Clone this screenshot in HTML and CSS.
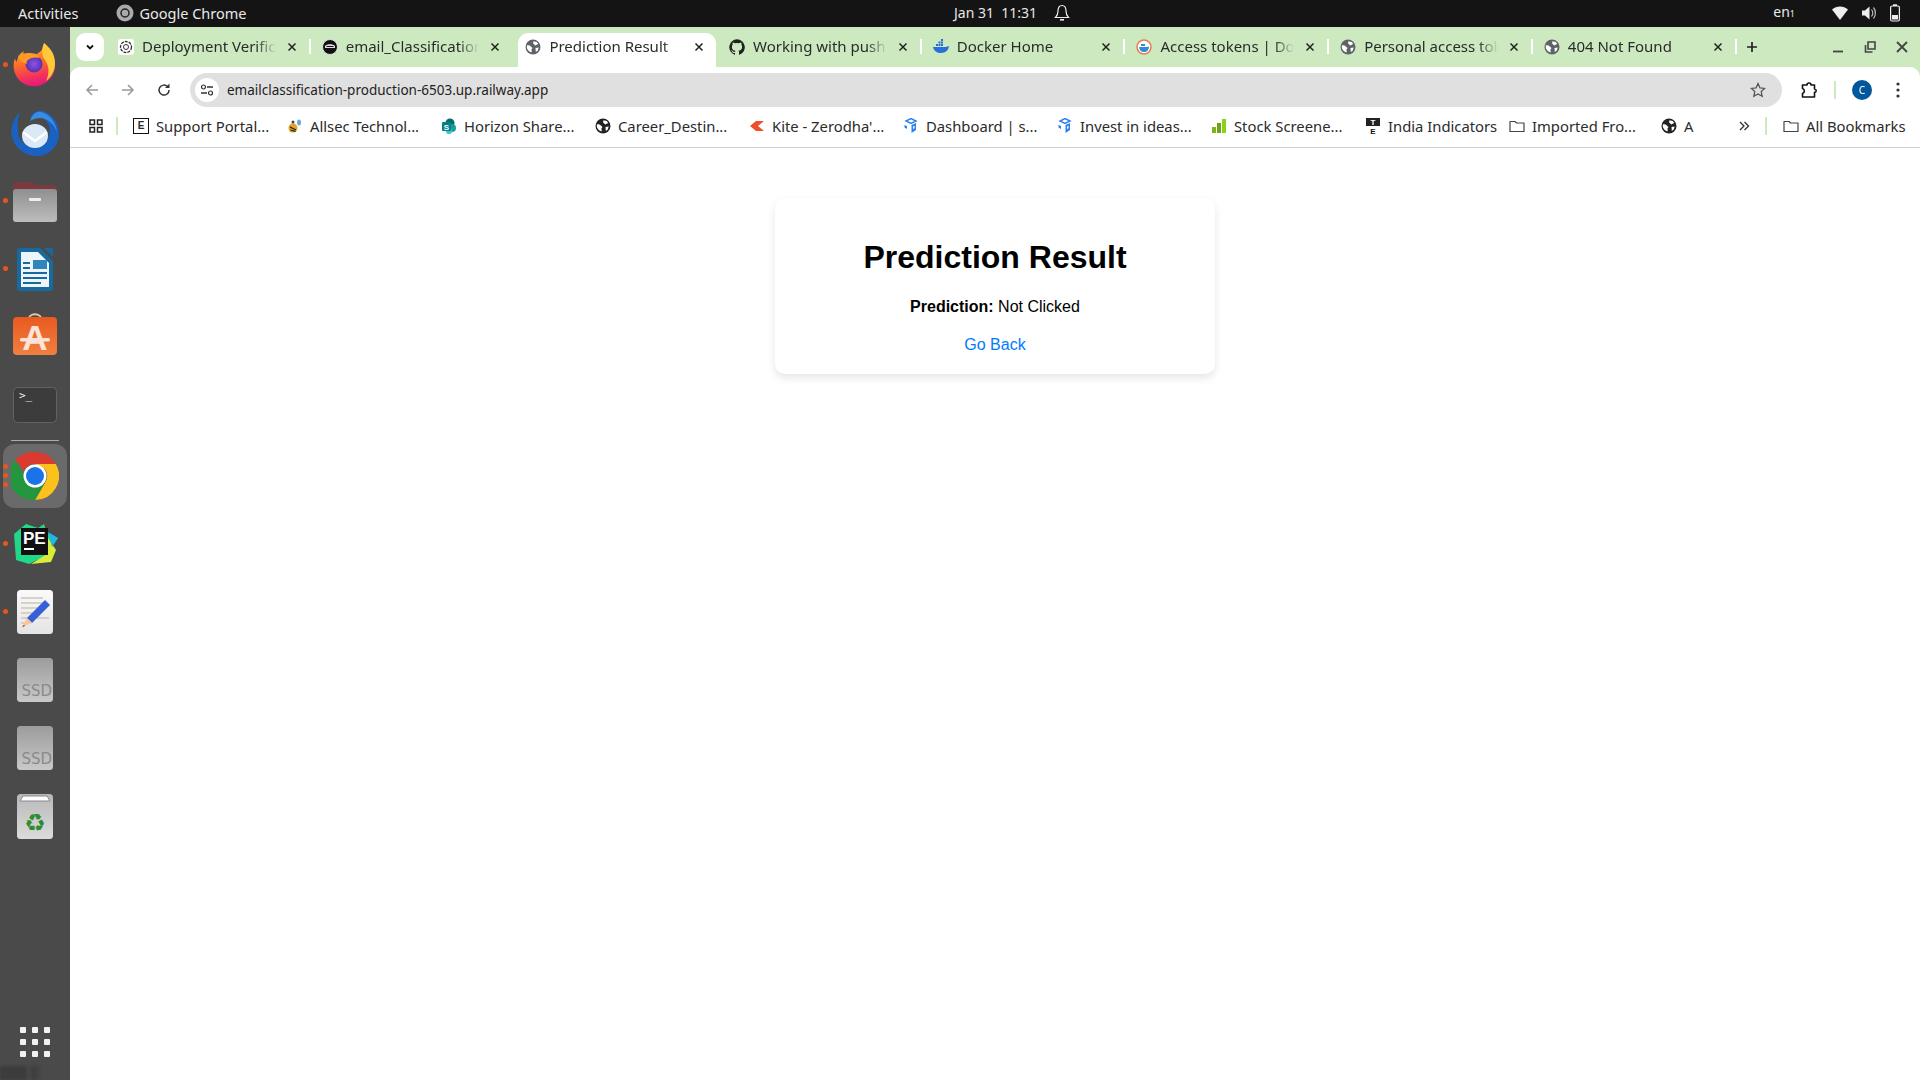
FILE: index.html

```html
<!DOCTYPE html>
<html>
<head>
  <title>Prediction Result</title>
  <link rel="stylesheet" href="styles.css">
</head>
<body>
  <svg class="defs" width="0" height="0">
    <symbol id="globe" viewBox="0 0 16 16">
      <circle cx="8" cy="8" r="7.500" fill="currentColor"/>
      <path d="M1.800 6.500c1.500-.5 3 0 4 1l1.700 1.500-1 1.200.2 3.300C4 13 2 10.500 1.800 8.500zM8.500 2.200l3.200.7 1.500 2-3 1.600-2.200-2.200zM10.500 9l3.200-.5-.9 3-2 1.500z" fill="#fff"/>
    </symbol>
    <symbol id="folder" viewBox="0 0 16 16">
      <path d="M1 3.500h5l1.500 1.500H15v8.500H1z" fill="none" stroke="currentColor" stroke-width="1.200" stroke-linejoin="round"/>
    </symbol>
    <symbol id="cube" viewBox="0 0 16 16">
      <path d="M8 .5l5 2.500-5 2.500-5-2.500z" fill="none" stroke="#2f80ed" stroke-width="1.500"/>
      <path d="M8.500 7l4.500-2v7l-4.500 3zM1.500 7l2.500 1v3l-2.500-1.500z" fill="#2f80ed"/>
      <path d="M10 8.500l1.500-.7v2.500l-1.500.7z" fill="#fff"/>
    </symbol>
    <symbol id="close" viewBox="0 0 16 16">
      <path d="M4.500 4.500l7 7M11.500 4.500l-7 7" stroke="currentColor" stroke-width="1.500" fill="none"/>
    </symbol>
    <symbol id="ssd" viewBox="0 0 36 44">
      <rect width="36" height="44" rx="3.500" fill="url(#ssdGrad)"/>
      <text x="35" y="38" text-anchor="end" class="ssd-label">SSD</text>
    </symbol>
    <linearGradient id="ssdGrad" x1="0" y1="0" x2="0" y2="1">
      <stop offset="0" stop-color="#9c9c9c"/><stop offset="1" stop-color="#c9c9c9"/>
    </linearGradient>
  </svg>

  <header class="top-bar">
    <div class="top-left">
      <span class="activities">Activities</span>
      <svg class="top-app-icon" width="18" height="18" viewBox="0 0 18 18"><circle cx="9" cy="9" r="8.500" fill="#aaa"/><circle cx="9" cy="9" r="4" fill="none" stroke="#222" stroke-width="1.500"/></svg>
      <span>Google Chrome</span>
    </div>
    <div class="top-clock">
      <span>Jan 31&nbsp;&nbsp;11:31</span>
      <svg width="16" height="18" viewBox="0 0 16 18"><path d="M8 1.500c-3 0-4 2.500-4 5.500 0 3-1 5-2.500 6.500h13C13 12 12 10 12 7c0-3-1-5.500-4-5.500z" fill="none" stroke="#eee" stroke-width="1.200"/><rect x="6" y="15" width="4" height="1.600" fill="#eee"/></svg>
    </div>
    <div class="top-right">
      <span class="lang">en<small>1</small></span>
      <svg class="wifi" width="16" height="14" viewBox="0 0 16 14"><path d="M0 3.500C4.500-.5 11.500-.5 16 3.500L8 14z" fill="#eee"/></svg>
      <svg class="vol" width="16" height="16" viewBox="0 0 16 16"><path d="M1 5.500h3L8.500 1.500v13L4 10.500H1z" fill="#eee"/><path d="M10.500 4.500c1.500 2 1.500 5 0 7M12.500 2.500c2.500 3 2.500 8 0 11" fill="none" stroke="#bbb" stroke-width="1.200"/></svg>
      <svg width="10" height="18" viewBox="0 0 10 18"><rect x=".6" y="2" width="8.800" height="15" rx="1.500" fill="none" stroke="#eee" stroke-width="1.200"/><rect x="3" y=".3" width="4" height="1.700" fill="#eee"/><rect x="2" y="11" width="6" height="4.500" fill="#eee"/></svg>
    </div>
  </header>

  <div class="desktop">
    <aside class="dock">
      <div class="dock-item running">
        <svg width="44" height="44" viewBox="0 0 44 44">
          <defs>
            <linearGradient id="ffOuter" x1=".3" y1="0" x2=".5" y2="1"><stop offset="0" stop-color="#ffc02e"/><stop offset=".45" stop-color="#ff6f24"/><stop offset=".8" stop-color="#f2305f"/><stop offset="1" stop-color="#e3197f"/></linearGradient>
            <radialGradient id="ffBall"><stop offset="0" stop-color="#8a55e8"/><stop offset="1" stop-color="#5a2fb0"/></radialGradient>
          </defs>
          <path d="M31 0c1 5 6 7 9 13 4 9 2 19-5 25-8 7-20 7-28 0C1 32-1 23 2 15c0 2 1 3 2 4 0-4 3-9 7-11-1 2-1 3 0 4 4-3 9-1 13-1 4-3 8-6 7-11z" fill="url(#ffOuter)"/>
          <path d="M31 0c5 4 11 10 11 20 0 8-4 14-9 18 3-6 4-14-1-21-3-4-4-10-1-17z" fill="#ffc93a"/>
          <circle cx="21" cy="21" r="8.500" fill="url(#ffBall)"/>
          <path d="M5 13c5-3 11-4 16-2 3 1 5 3 6 4-4-1-9-1-12 2-1 1-2 2-1 4-4-1-7-4-9-8z" fill="#ff9a24"/>
        </svg>
      </div>
      <div class="dock-item">
        <svg width="48" height="46" viewBox="0 0 48 46">
          <path d="M9 2C2 9-1 18 1 27c3 12 14 19 25 19 12 0 22-10 22-22 0-10-6-20-16-23-6-1-11 2-13 7 5-3 13-2 17 4 5 7 3 18-5 23-8 4-19 1-23-8C6 19 6 10 9 2z" fill="#1a62c2"/>
          <path d="M30 2c8 2 15 10 16 20-3-8-9-13-16-14-4 0-8 1-11 3 2-6 6-10 11-9z" fill="#3d8be0"/>
          <ellipse cx="24" cy="26" rx="13" ry="12" fill="#d9e9f8"/>
          <path d="M12 22l12 9 12-9" fill="none" stroke="#fff" stroke-width="2.500"/>
        </svg>
      </div>
      <div class="dock-item running">
        <svg width="44" height="41" viewBox="0 0 44 41">
          <defs><linearGradient id="filesBody" x1="0" y1="0" x2="0" y2="1"><stop offset="0" stop-color="#8f8f8f"/><stop offset="1" stop-color="#bdbdbd"/></linearGradient></defs>
          <path d="M0 4a3 3 0 013-3h16l4 3h18a3 3 0 013 3v8H0z" fill="#7a3a40"/>
          <rect y="8" width="44" height="33" rx="3" fill="url(#filesBody)"/>
          <rect x="16" y="17" width="12" height="3" rx="1" fill="#eee"/>
        </svg>
      </div>
      <div class="dock-item running">
        <svg width="37" height="44" viewBox="0 0 37 44">
          <path d="M27 1h9v9z" fill="#14699e"/>
          <path d="M3 1h20l13 13v27a3 3 0 01-3 3H3a3 3 0 01-3-3V4a3 3 0 013-3z" fill="#18699e"/>
          <path d="M4 5h17l11 11v24H4z" fill="#eef5fa"/>
          <path d="M6 15h7v2H6zM6 20h7v2H6zM6 25h24v2H6zM6 30h24v2H6zM6 35h18v2H6z" fill="#18699e"/>
          <rect x="16" y="13" width="14" height="9" fill="#2f86b8"/>
        </svg>
      </div>
      <div class="dock-item">
        <svg class="store-icon" width="44" height="42" viewBox="0 0 44 42">
          <defs><linearGradient id="storeBody" x1="0" y1="0" x2="0" y2="1"><stop offset="0" stop-color="#e95a20"/><stop offset="1" stop-color="#f08040"/></linearGradient></defs>
          <path d="M15 8c0-9 14-9 14 0" fill="none" stroke="#e8c8a8" stroke-width="1.800"/>
          <rect y="4" width="44" height="38" rx="4" fill="url(#storeBody)"/>
          <text x="22" y="37" text-anchor="middle" class="store-label">A</text>
          <rect x="7" y="25" width="30" height="3.500" rx="1.500" fill="#fde3d6"/>
        </svg>
      </div>
      <div class="dock-item">
        <svg width="44" height="36" viewBox="0 0 44 36">
          <rect x=".5" y=".5" width="43" height="35" rx="4" fill="#3c3c3c" stroke="#626262"/>
          <text x="6" y="12" class="term-label">&gt;_</text>
        </svg>
      </div>
      <div class="dock-separator"></div>
      <div class="dock-item dock-active running-three">
        <svg width="48" height="48" viewBox="0 0 48 48">
          <path d="M24 0a24 24 0 0120.800 12H24a12 12 0 00-11 7L4.400 8A24 24 0 0124 0z" fill="#db3b2f"/>
          <path d="M44.800 12A24 24 0 0124 48l10.400-18A12 12 0 0034 17l-10-5z" fill="#fcc21b"/>
          <path d="M24 48A24 24 0 014.400 8L14 24.500a12 12 0 0011 11.500l9.400-6z" fill="#23963e"/>
          <circle cx="24" cy="24" r="11.500" fill="#fff"/>
          <circle cx="24" cy="24" r="9" fill="#1a73e8"/>
        </svg>
      </div>
      <div class="dock-item running">
        <svg width="46" height="44" viewBox="0 0 46 44">
          <path d="M2 12L14 2l12 4 6-4 0 8 14 6-6 8-1 12-14 2-8 4-13-4z" fill="#21d789"/>
          <path d="M32 2l3 30-16 10 20-2 5-12-8-12z" fill="#d9ec37"/>
          <path d="M36 10l10 6-6 9z" fill="#1fb6e8"/>
          <rect x="9" y="6" width="27" height="27" fill="#111"/>
          <text x="11" y="22" class="pe-label">PE</text>
          <rect x="12" y="26" width="10" height="2" fill="#fff"/>
        </svg>
      </div>
      <div class="dock-item running">
        <svg width="36" height="44" viewBox="0 0 36 44">
          <defs><linearGradient id="padBody" x1="0" y1="0" x2="0" y2="1"><stop offset="0" stop-color="#fafafa"/><stop offset="1" stop-color="#e4e4e4"/></linearGradient></defs>
          <rect width="36" height="44" rx="3.500" fill="url(#padBody)"/>
          <path d="M4 8h22M4 13h22M4 18h20M4 23h14M4 28h28M4 33h6" stroke="#cfc8b8" stroke-width="1.500"/>
          <path d="M28 10l5 5-18 18-5-5z" fill="#3560d8"/>
          <path d="M10 28l5 5-10 4z" fill="#f5c79a"/>
          <path d="M7 35l-2 2 3-1z" fill="#333"/>
        </svg>
      </div>
      <div class="dock-item"><svg width="36" height="44"><use href="#ssd"/></svg></div>
      <div class="dock-item"><svg width="36" height="44"><use href="#ssd"/></svg></div>
      <div class="dock-item">
        <svg width="36" height="45" viewBox="0 0 36 45">
          <defs><linearGradient id="trashBody" x1="0" y1="0" x2="0" y2="1"><stop offset="0" stop-color="#b8b8b8"/><stop offset="1" stop-color="#dcdcdc"/></linearGradient></defs>
          <rect width="36" height="45" rx="3.500" fill="url(#trashBody)"/>
          <path d="M3 7l3-5h24l3 5z" fill="#fff" stroke="#8a8a8a"/>
          <text x="18" y="37" text-anchor="middle" class="recycle">♻</text>
        </svg>
      </div>
      <div class="dock-grid">
        <i></i><i></i><i></i><i></i><i></i><i></i><i></i><i></i><i></i>
      </div>
      <div class="dock-smudge"></div>
    </aside>

    <div class="browser">
      <div class="tab-strip">
        <button class="tab-list">
          <svg width="12" height="12" viewBox="0 0 12 12"><path d="M3 4.500L6 7.500 9 4.500" fill="none" stroke="#111" stroke-width="1.800"/></svg>
        </button>
        <div class="tab">
          <svg class="favicon" viewBox="0 0 16 16"><rect width="16" height="16" rx="3" fill="#fff"/><circle cx="8" cy="8" r="5.500" fill="none" stroke="#333" stroke-width="1.300" stroke-dasharray="3 1"/><circle cx="8" cy="8" r="2.500" fill="none" stroke="#333"/></svg>
          <span class="tab-title">Deployment Verification</span>
          <svg class="tab-close"><use href="#close"/></svg>
        </div>
        <div class="tab no-divider">
          <svg class="favicon" viewBox="0 0 16 16"><circle cx="8" cy="8" r="7.500" fill="#111" stroke="#ddd"/><path d="M3 7c1.500-2.500 8.500-2.500 10 0v2H3z" fill="#ddd"/><path d="M4.500 7.500h7" stroke="#111"/></svg>
          <span class="tab-title">email_Classification</span>
          <svg class="tab-close"><use href="#close"/></svg>
        </div>
        <div class="tab tab-active no-divider">
          <svg class="favicon globe-grey"><use href="#globe"/></svg>
          <span class="tab-title">Prediction Result</span>
          <svg class="tab-close"><use href="#close"/></svg>
        </div>
        <div class="tab">
          <svg class="favicon" viewBox="0 0 16 16"><path d="M8 .3a8 8 0 00-2.500 15.500c.4.1.5-.2.5-.4v-1.400c-2.200.5-2.700-1-2.700-1-.4-.9-.9-1.200-.9-1.200-.7-.5.1-.5.1-.5.8.1 1.200.8 1.200.8.7 1.200 1.900.9 2.300.7.1-.5.3-.9.5-1.100-1.800-.2-3.600-.9-3.600-4 0-.9.3-1.600.8-2.100-.1-.2-.4-1 .1-2.100 0 0 .7-.2 2.200.8a7.500 7.500 0 014 0c1.500-1 2.200-.8 2.200-.8.5 1.100.2 1.900.1 2.100.5.6.8 1.300.8 2.100 0 3.100-1.900 3.700-3.700 3.900.3.300.6.800.6 1.500v2.300c0 .2.1.5.6.4A8 8 0 008 .3z" fill="#222"/></svg>
          <span class="tab-title">Working with push protection</span>
          <svg class="tab-close"><use href="#close"/></svg>
        </div>
        <div class="tab">
          <svg class="favicon" viewBox="0 0 16 16"><path d="M0 8h13c1 0 2-1 3-1-.5 4-3 7-8 7-4 0-7-2-8-6z" fill="#2a6fd8"/><path d="M3 5h2v2H3zM5.500 5h2v2h-2zM8 5h2v2H8zM5.500 2.500h2v2h-2zM8 2.500h2v2H8zM8 0h2v2H8z" fill="#2a6fd8"/></svg>
          <span class="tab-title">Docker Home</span>
          <svg class="tab-close"><use href="#close"/></svg>
        </div>
        <div class="tab">
          <svg class="favicon" viewBox="0 0 16 16"><circle cx="8" cy="8" r="7" fill="#fff" stroke="#e67c52" stroke-width="1.500"/><path d="M3 8h8c1 0 1.500-.5 2-.5C13 11 11 13 8 13c-3 0-4.500-2-5-5z" fill="#2a8fd8"/><path d="M5 5h4v2H5z" fill="#2a8fd8"/></svg>
          <span class="tab-title">Access tokens | Docker</span>
          <svg class="tab-close"><use href="#close"/></svg>
        </div>
        <div class="tab">
          <svg class="favicon globe-grey"><use href="#globe"/></svg>
          <span class="tab-title">Personal access tokens</span>
          <svg class="tab-close"><use href="#close"/></svg>
        </div>
        <div class="tab">
          <svg class="favicon globe-grey"><use href="#globe"/></svg>
          <span class="tab-title">404 Not Found</span>
          <svg class="tab-close"><use href="#close"/></svg>
        </div>
        <svg class="new-tab" width="14" height="14" viewBox="0 0 14 14"><path d="M7 2v10M2 7h10" stroke="#222" stroke-width="1.700"/></svg>
        <div class="window-controls">
          <svg width="14" height="14" viewBox="0 0 14 14"><path d="M2 11.500h10" stroke="#444" stroke-width="1.800"/></svg>
          <svg width="14" height="14" viewBox="0 0 14 14"><path d="M5 2h7v7H5zM2.500 5v7h7" fill="none" stroke="#444" stroke-width="1.600"/></svg>
          <svg width="14" height="14" viewBox="0 0 14 14"><path d="M2 2l10 10M12 2L2 12" stroke="#444" stroke-width="1.800"/></svg>
        </div>
      </div>

      <div class="toolbar">
        <svg class="nav-icon nav-back" viewBox="0 0 16 16"><path d="M14 8H3M8 3L3 8l5 5" fill="none" stroke="#999" stroke-width="1.500"/></svg>
        <svg class="nav-icon nav-forward" viewBox="0 0 16 16"><path d="M2 8h11M8 3l5 5-5 5" fill="none" stroke="#999" stroke-width="1.500"/></svg>
        <svg class="nav-icon nav-reload" viewBox="0 0 16 16"><path d="M13 8a5 5 0 11-1.500-3.500" fill="none" stroke="#333" stroke-width="1.500"/><path d="M13.500 1.500v4.500H9z" fill="#333"/></svg>
        <div class="address-bar">
          <span class="site-info">
            <svg width="14" height="14" viewBox="0 0 14 14"><path d="M7 4h6M1 10h6" stroke="#333" stroke-width="1.300"/><circle cx="3.500" cy="4" r="2" fill="none" stroke="#333" stroke-width="1.200"/><circle cx="10.500" cy="10" r="2" fill="none" stroke="#333" stroke-width="1.200"/></svg>
          </span>
          <span class="url">emailclassification-production-6503.up.railway.app</span>
          <svg class="star" width="16" height="16" viewBox="0 0 16 16"><path d="M8 1.500l2 4.400 4.700.5-3.500 3.200 1 4.700L8 11.900l-4.200 2.400 1-4.700L1.300 6.400 6 5.900z" fill="none" stroke="#555" stroke-width="1.300"/></svg>
        </div>
        <svg class="ext-icon" width="18" height="18" viewBox="0 0 18 18"><path d="M2.500 4H7a2 2 0 014 0h3.500v4a1.700 1.700 0 010 3.400V16H2.500v-3.500a2.600 2.600 0 000-5z" fill="none" stroke="#111" stroke-width="1.600" stroke-linejoin="round"/></svg>
        <span class="toolbar-divider"></span>
        <span class="avatar">C</span>
        <svg class="menu-icon" width="4" height="16" viewBox="0 0 4 16"><circle cx="2" cy="2" r="1.600" fill="#333"/><circle cx="2" cy="8" r="1.600" fill="#333"/><circle cx="2" cy="14" r="1.600" fill="#333"/></svg>
      </div>

      <nav class="bookmarks">
        <svg class="apps-icon" width="14" height="14" viewBox="0 0 14 14"><path d="M1 1h4.500v4.500H1zM8.500 1H13v4.500H8.500zM1 8.500h4.500V13H1zM8.500 8.500H13V13H8.500z" fill="none" stroke="#222" stroke-width="1.500"/></svg>
        <span class="bookmark-divider"></span>
        <a class="bookmark"><span class="fav-e">E</span><span>Support Portal...</span></a>
        <a class="bookmark">
          <svg class="favicon" viewBox="0 0 16 16"><ellipse cx="6" cy="10" rx="4.500" ry="4.500" fill="#e0a422"/><path d="M3 9l6 3M3.500 12l5 1.500" stroke="#222" stroke-width="1.300"/><ellipse cx="12" cy="4.500" rx="2" ry="3" fill="#6aa7e0"/><circle cx="6" cy="4" r="1.500" fill="#444"/></svg>
          <span>Allsec Technol...</span>
        </a>
        <a class="bookmark">
          <svg class="favicon" viewBox="0 0 16 16"><circle cx="9" cy="5" r="4.500" fill="#036c70"/><circle cx="11" cy="10" r="4" fill="#1a9ba1"/><circle cx="8" cy="13" r="3" fill="#37c6d0"/><rect x="1" y="4" width="9" height="9" rx="1" fill="#038387"/><text x="5.500" y="11.500" text-anchor="middle" class="fav-s">S</text></svg>
          <span>Horizon Share...</span>
        </a>
        <a class="bookmark"><svg class="favicon globe-dark"><use href="#globe"/></svg><span>Career_Destin...</span></a>
        <a class="bookmark">
          <svg class="favicon" viewBox="0 0 16 16"><path d="M1 8l6-5h8L9 8l6 5H7z" fill="#ee4e2b"/></svg>
          <span>Kite - Zerodha'...</span>
        </a>
        <a class="bookmark"><svg class="favicon"><use href="#cube"/></svg><span>Dashboard | s...</span></a>
        <a class="bookmark"><svg class="favicon"><use href="#cube"/></svg><span>Invest in ideas...</span></a>
        <a class="bookmark">
          <svg class="favicon" viewBox="0 0 16 16"><path d="M1 9h4v6H1z" fill="#7cb518"/><path d="M6 5h4v10H6z" fill="#6aa614"/><path d="M11 1h4v14h-4z" fill="#8ccf1e"/></svg>
          <span>Stock Screene...</span>
        </a>
        <a class="bookmark bookmark-india">
          <svg class="favicon" viewBox="0 0 16 16"><rect x="1" width="14" height="8" fill="#222"/><text x="8" y="7" text-anchor="middle" class="fav-t fav-t-light">T</text><text x="8" y="15.500" text-anchor="middle" class="fav-t">E</text></svg>
          <span>India Indicators</span>
        </a>
        <a class="bookmark bookmark-imported"><svg class="favicon folder-icon"><use href="#folder"/></svg><span>Imported Fro...</span></a>
        <a class="bookmark bookmark-a"><svg class="favicon globe-dark"><use href="#globe"/></svg><span>A</span></a>
        <svg class="chevrons" width="12" height="12" viewBox="0 0 12 12"><path d="M2 2l4 4-4 4M6.500 2l4 4-4 4" fill="none" stroke="#333" stroke-width="1.300"/></svg>
        <span class="bookmark-divider bookmark-divider-end"></span>
        <a class="bookmark bookmark-all"><svg class="favicon folder-icon"><use href="#folder"/></svg><span>All Bookmarks</span></a>
      </nav>

      <main class="page">
        <div class="result-card">
          <h1>Prediction Result</h1>
          <p><strong>Prediction:</strong> Not Clicked</p>
          <a class="back-link" href="#">Go Back</a>
        </div>
      </main>
    </div>
  </div>
</body>
</html>
```

FILE: styles.css

```css
* {
  box-sizing: border-box;
}

html, body {
  margin: 0;
  height: 100%;
  overflow: hidden;
}

body {
  display: flex;
  flex-direction: column;
  height: 1080px;
  font-family: "Noto Sans", sans-serif;
  background-color: #fff;
}

.defs {
  position: absolute;
}

/* gnome top bar */
.top-bar {
  flex: 0 0 27px;
  display: grid;
  grid-template-columns: 1fr auto 1fr;
  align-items: center;
  background-color: #141414;
  color: #e8e8e8;
  font-size: 14.500px;
  line-height: 20px;
  padding: 0 20px 2px 18px;
}

.top-left {
  display: flex;
  align-items: center;
}

.activities {
  margin-right: 38px;
}

.top-app-icon {
  margin-right: 5px;
}

.top-clock {
  display: flex;
  align-items: center;
  gap: 17px;
  margin-left: 106px;
  font-size: 14px;
}

.top-right {
  display: flex;
  align-items: center;
  justify-content: flex-end;
  gap: 13px;
}

.lang {
  margin-right: 24px;
  font-size: 14px;
}

.lang small {
  font-size: 9px;
}

/* ubuntu dock */
.desktop {
  flex: 1;
  display: flex;
  min-height: 0;
}

.dock {
  position: relative;
  flex: 0 0 70px;
  display: flex;
  flex-direction: column;
  align-items: center;
  padding-top: 4px;
  background-color: #4a4a4a;
}

.dock-item {
  position: relative;
  width: 64px;
  height: 68px;
  flex: none;
  display: flex;
  align-items: center;
  justify-content: center;
}

.running::before,
.running-three::before {
  content: "";
  position: absolute;
  left: 0;
  top: 31px;
  width: 5px;
  height: 5px;
  border-radius: 50%;
  background-color: #e95420;
}

.running-three::before {
  top: 29px;
  box-shadow: 0 -9px 0 #e95420, 0 9px 0 #e95420;
}

.dock-active {
  height: 64px;
  margin: 3px 0 2px;
  border-radius: 12px;
  background-color: #6a6a6a;
}

.dock-separator {
  flex: none;
  width: 48px;
  height: 1px;
  margin-top: 1px;
  background-color: #aaa;
}

.store-icon {
  margin-bottom: 6px;
}

.ssd-label {
  font-family: "DejaVu Sans", sans-serif;
  font-size: 15px;
  fill: #8a8a8a;
}

.store-label {
  font-family: "Liberation Sans", sans-serif;
  font-weight: bold;
  font-size: 35px;
  fill: #fde3d6;
}

.term-label {
  font-family: "DejaVu Sans Mono", monospace;
  font-size: 11px;
  fill: #eee;
}

.pe-label {
  font-family: "Liberation Sans", sans-serif;
  font-weight: bold;
  font-size: 17px;
  fill: #fff;
}

.recycle {
  font-family: "DejaVu Sans", sans-serif;
  font-size: 24px;
  fill: #2e8b2e;
}

.dock-grid {
  margin-top: auto;
  margin-bottom: 23px;
  display: grid;
  grid-template-columns: repeat(3, 6px);
  gap: 6px;
}

.dock-grid i {
  width: 6px;
  height: 6px;
  border-radius: 1px;
  background-color: #f2f2f2;
}

.dock-smudge {
  position: absolute;
  left: 0;
  bottom: 0;
  width: 42px;
  height: 14px;
  background: linear-gradient(to right, #3c3c3c 60%, #4a4a4a 68%, #3c3c3c 80%, #4a4a4a);
  filter: blur(1.500px);
}

/* chrome */
.browser {
  flex: 1;
  display: flex;
  flex-direction: column;
  min-width: 0;
  background-color: #cde9c0;
}

.tab-strip {
  flex: 0 0 40px;
  display: flex;
  padding: 6px 0 0 6px;
  color: #222;
}

.tab-list {
  flex: none;
  width: 28px;
  height: 28px;
  margin-right: 4px;
  padding: 0;
  border: 0;
  border-radius: 9px;
  background-color: #fff;
  display: flex;
  align-items: center;
  justify-content: center;
}

.tab {
  position: relative;
  z-index: 0;
  flex: none;
  width: 203.700px;
  height: 34px;
  display: flex;
  align-items: center;
  gap: 8px;
  padding: 0 12px 6px 10px;
  font-size: 15px;
  line-height: 20px;
  color: #2b2b2b;
}

.tab-title {
  position: relative;
  top: -1px;
}

.tab::after {
  content: "";
  position: absolute;
  right: 1px;
  top: 6px;
  width: 2px;
  height: 15px;
  background-color: #fff;
}

.no-divider::after {
  display: none;
}

.tab-active::before {
  content: "";
  position: absolute;
  z-index: -1;
  top: 0;
  bottom: 0;
  left: 3px;
  right: 3px;
  border-radius: 10px 10px 0 0;
  background-color: #fff;
}

.favicon {
  flex: none;
  width: 16px;
  height: 16px;
}

.tab-title {
  flex: 1;
  min-width: 0;
  white-space: nowrap;
  overflow: hidden;
  -webkit-mask-image: linear-gradient(to right, #000 85%, transparent);
  mask-image: linear-gradient(to right, #000 85%, transparent);
}

.tab-close {
  flex: none;
  width: 16px;
  height: 16px;
  color: #222;
}

.globe-grey {
  color: #5f6368;
}

.globe-dark {
  color: #222;
}

.folder-icon {
  color: #444;
}

.new-tab {
  flex: none;
  margin: 7px 0 0 7px;
}

.window-controls {
  margin: 7px 11px 0 auto;
  display: flex;
  gap: 18px;
}

.toolbar {
  flex: 0 0 40px;
  display: flex;
  align-items: center;
  padding: 6px 0 0 14px;
  border-radius: 10px 10px 0 0;
  background-color: #fff;
}

.nav-icon {
  flex: none;
  width: 16px;
  height: 16px;
}

.nav-forward {
  margin-left: 20px;
}

.nav-reload {
  margin-left: 20px;
}

.address-bar {
  flex: 0 0 1592px;
  height: 34px;
  margin-left: 18px;
  display: flex;
  align-items: center;
  padding: 0 16px 0 5px;
  border-radius: 17px;
  background-color: #e0e0e0;
}

.site-info {
  width: 24px;
  height: 24px;
  border-radius: 50%;
  background-color: #fff;
  display: flex;
  align-items: center;
  justify-content: center;
}

.url {
  flex: 1;
  margin-left: 8px;
  font-size: 13.500px;
  color: #222;
}

.ext-icon {
  flex: none;
  margin-left: 18px;
}

.toolbar-divider {
  flex: none;
  width: 2px;
  height: 18px;
  margin-left: 16px;
  background-color: #cde9c0;
}

.avatar {
  flex: none;
  width: 20px;
  height: 20px;
  margin-left: 16px;
  border-radius: 50%;
  background-color: #01579b;
  color: #fff;
  font-size: 10px;
  text-align: center;
  line-height: 20px;
}

.menu-icon {
  flex: none;
  margin-left: 24px;
}

.bookmarks {
  flex: 0 0 41px;
  display: flex;
  align-items: center;
  padding: 0 0 3px 19px;
  background-color: #fff;
  border-bottom: 1px solid #d0d0d0;
  font-size: 14.800px;
  line-height: 20px;
  color: #2b2b2b;
}

.apps-icon {
  flex: none;
}

.bookmark-divider {
  flex: none;
  width: 2px;
  height: 18px;
  margin: 0 15px 0 13px;
  background-color: #cde9c0;
}

.bookmark {
  flex: none;
  width: 154px;
  display: flex;
  align-items: center;
  gap: 7px;
  white-space: nowrap;
}

.fav-e {
  flex: none;
  width: 16px;
  height: 16px;
  border: 1px solid #111;
  font-family: "Liberation Sans", sans-serif;
  font-size: 10px;
  font-weight: bold;
  line-height: 14px;
  text-align: center;
}

.fav-s {
  font-family: "Liberation Sans", sans-serif;
  font-weight: bold;
  font-size: 8px;
  fill: #fff;
}

.fav-t {
  font-family: "Liberation Sans", sans-serif;
  font-weight: bold;
  font-size: 8px;
  fill: #111;
}

.fav-t-light {
  fill: #fff;
}

.bookmark-india {
  width: 144px;
}

.bookmark-imported {
  width: 152px;
}

.bookmark-a {
  width: 77px;
}

.chevrons {
  flex: none;
}

.bookmark-divider-end {
  margin: 0 16px 0 15px;
}

.bookmark-all {
  width: auto;
}

/* the page in the tab */
.page {
  flex: 1;
  background-color: #fff;
  padding-top: 50px;
  font-family: "Liberation Sans", Arial, sans-serif;
}

.result-card {
  width: 440px;
  margin: 0 auto;
  padding: 20px;
  border-radius: 10px;
  background-color: #fff;
  box-shadow: 0 4px 8px rgba(0, 0, 0, 0.1);
  text-align: center;
}

.result-card h1 {
  margin: 21px 0 22px;
  font-size: 32px;
  line-height: 37px;
  color: #000;
}

.result-card p {
  margin: 0 0 19px;
  font-size: 16px;
  line-height: 18px;
}

.back-link {
  display: block;
  font-size: 16px;
  line-height: 19px;
  color: #007bff;
  text-decoration: none;
}
```
